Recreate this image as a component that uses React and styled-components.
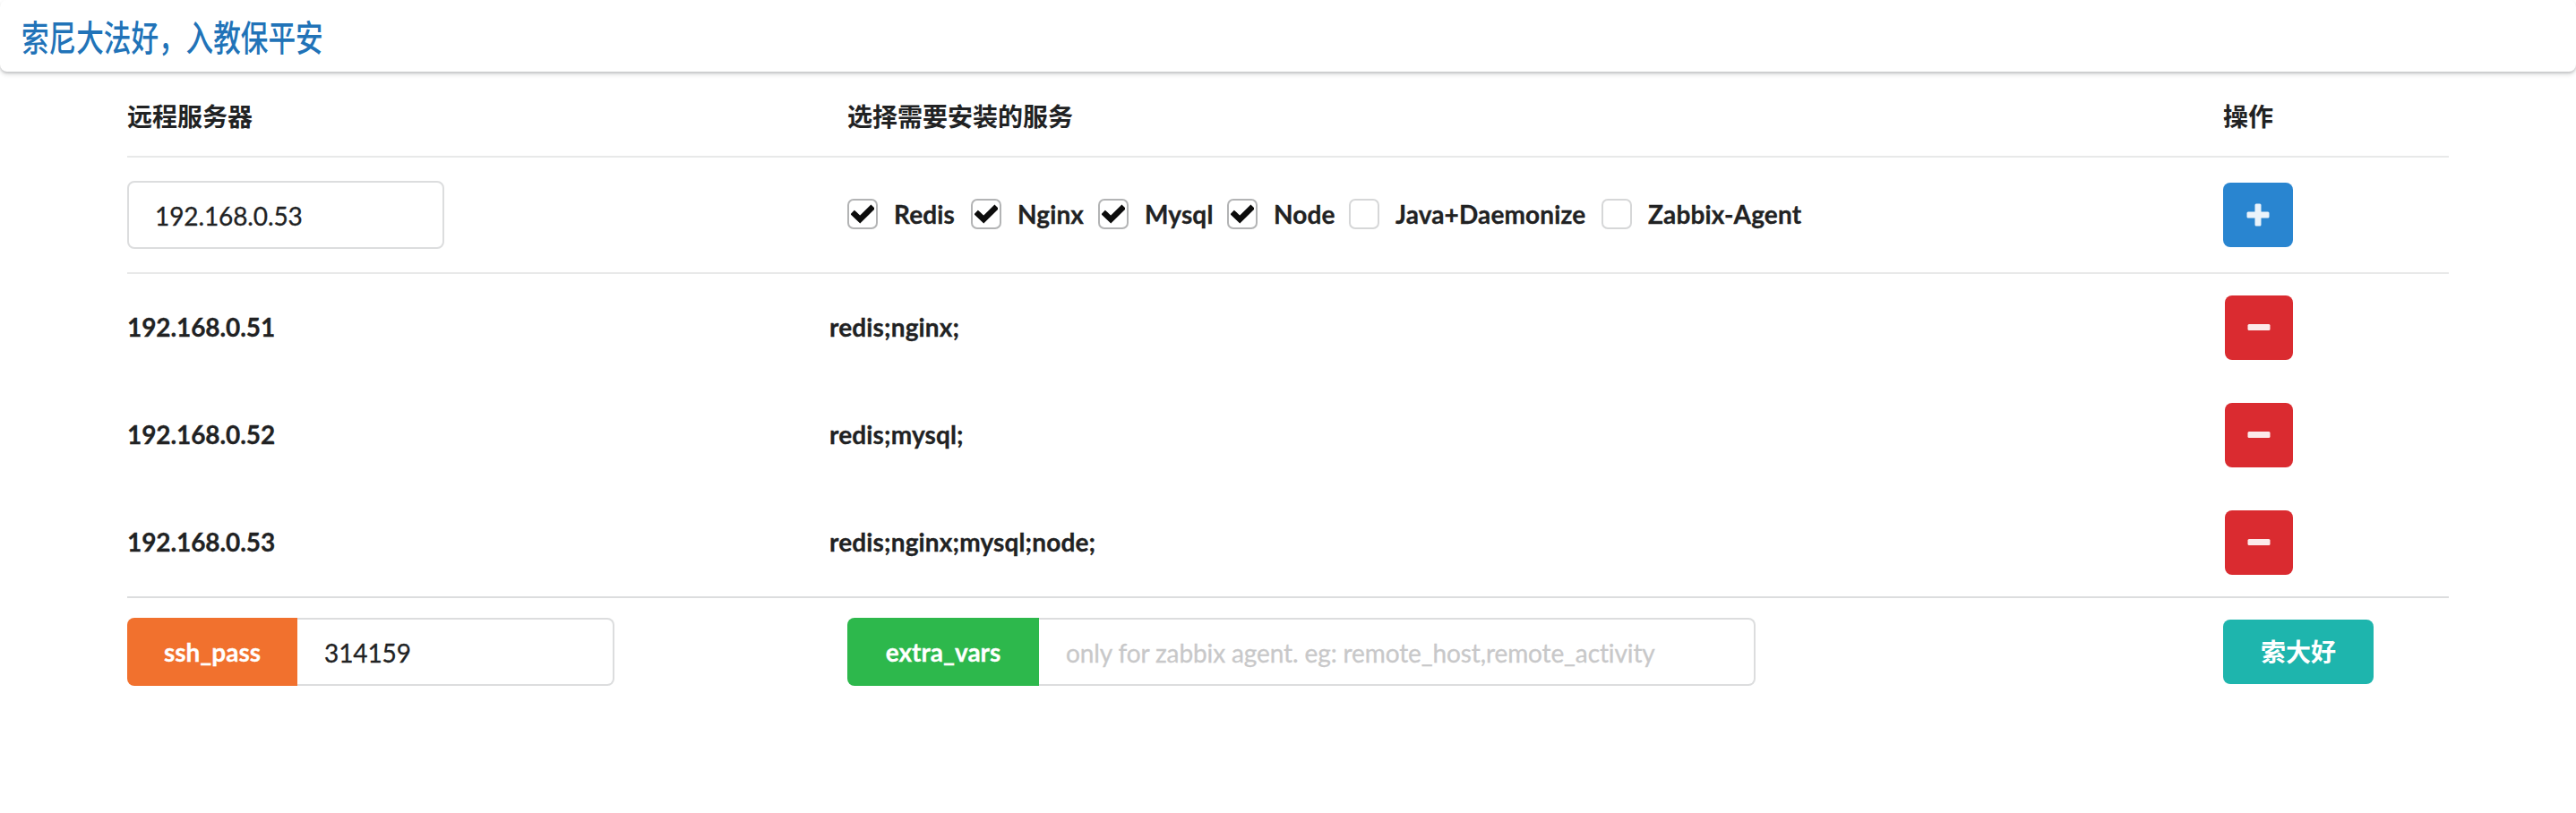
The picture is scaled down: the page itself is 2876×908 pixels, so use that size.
import React from "react";
import styled, { createGlobalStyle } from "styled-components";

const GlobalStyle = createGlobalStyle`
  *, *::before, *::after { box-sizing: border-box; }
  html { background: #fff; }
  body {
    margin: 0;
    background: #fff;
    color: #212223;
    font: 400 28px/40px Lato, "Noto Sans CJK SC", sans-serif;
  }
  input, button { font: inherit; color: inherit; margin: 0; }
`;

const Page = styled.div`
  min-height: 908px;
`;

const TopBar = styled.header`
  height: 80px;
  padding: 0 24px;
  display: flex;
  align-items: center;
  border-radius: 8px;
  box-shadow: 0 2px 2px 0 rgba(34, 36, 38, 0.12), 0 3px 5px 0 rgba(34, 36, 38, 0.16);
`;

const Brand = styled.h1`
  margin: 0;
  color: #2173b8;
  font: 500 40px/60px "Noto Sans CJK SC", sans-serif;
  white-space: nowrap;
  transform: scaleX(0.765);
  transform-origin: left center;
`;

const Main = styled.main`
  width: 2592px;
  margin: 0 142px;
`;

const Row = styled.div`
  display: grid;
  grid-template-columns: ${(p) => (p.$list ? "784px 1558px 250px" : "804px 1536px 252px")};
  align-items: center;
  height: ${(p) => p.$height}px;
  border-bottom: ${(p) => (p.$line ? `2px solid ${p.$line}` : "0")};
  font-weight: 700;
`;

const List = styled.section`
  border-bottom: 2px solid #dcddde;
`;

const Heading = styled.div`
  line-height: 40px;
  padding-top: 5px;
`;

const Cell = styled.span`
  padding-bottom: 3px;
  letter-spacing: ${(p) => p.$tracking}px;
  -webkit-text-stroke: 0.3px currentColor;
`;

const TextInput = styled.input`
  width: ${(p) => p.$width}px;
  height: 76px;
  padding: ${(p) => (p.$joined ? "2px 28px 0 30px" : "2px 28px 0 29px")};
  border: 2px solid #dcddde;
  border-left-width: ${(p) => (p.$joined ? 0 : 2)}px;
  border-radius: ${(p) => (p.$joined ? "0 8px 8px 0" : "8px")};
  background: #fff;
  color: #212223;
  font-weight: 400;
  letter-spacing: -0.11px;
  -webkit-text-stroke: 0.3px currentColor;
  outline: none;
  &::placeholder { color: #c8c8c9; opacity: 1; }
`;

const Labeled = styled.div`
  display: flex;
`;

const Tag = styled.label`
  width: ${(p) => p.$width}px;
  height: 76px;
  display: flex;
  align-items: center;
  justify-content: center;
  border-radius: 8px 0 0 8px;
  background: ${(p) => p.$color};
  color: #fff;
  -webkit-text-stroke: 0.3px currentColor;
`;

const Options = styled.div`
  display: flex;
  padding-bottom: 2px;
`;

const Option = styled.div`
  width: ${(p) => p.$width}px;
  display: flex;
  align-items: center;
  gap: 18px;
  white-space: nowrap;
`;

const OptionName = styled.span`
  letter-spacing: 0.14px;
  padding-bottom: 1px;
  -webkit-text-stroke: 0.3px currentColor;
`;

const Box = styled.span`
  flex: none;
  width: 34px;
  height: 34px;
  display: grid;
  place-items: center;
  border: 2px solid ${(p) => (p.$on ? "#b3b4b5" : "#d6d7d8")};
  border-radius: 7px;
`;

const Button = styled.button`
  width: ${(p) => p.$width}px;
  height: 72px;
  padding: 0;
  display: flex;
  align-items: center;
  justify-content: center;
  border: 0;
  border-radius: 8px;
  background: ${(p) => p.$color};
  color: #fff;
  font-weight: 700;
`;

const Check = () => (
  <svg width="26" height="22" viewBox="0 0 26 22">
    <path
      d="M4 11.200 10.200 17 22.400 5"
      fill="none"
      stroke="#0c0c0c"
      strokeWidth="6.400"
      strokeLinecap="square"
    />
  </svg>
);

const Sign = ({ plus }) => (
  <svg width="26" height="26" viewBox="0 0 26 26" fill="#fff" fillOpacity="0.9">
    {plus ? (
      <path d="M11 0.500h4a1.500 1.500 0 0 1 1.500 1.500v7.500h7.500a1.500 1.500 0 0 1 1.500 1.500v4a1.500 1.500 0 0 1-1.500 1.500h-7.500v7.500a1.500 1.500 0 0 1-1.500 1.500h-4a1.500 1.500 0 0 1-1.500-1.500v-7.500h-7.500a1.500 1.500 0 0 1-1.500-1.500v-4a1.500 1.500 0 0 1 1.500-1.500h7.500v-7.500a1.500 1.500 0 0 1 1.500-1.500z" />
    ) : (
      <rect x="0.500" y="9" width="25" height="7" rx="1.500" />
    )}
  </svg>
);

const services = [
  { name: "Redis", width: 138, on: true },
  { name: "Nginx", width: 142, on: true },
  { name: "Mysql", width: 144, on: true },
  { name: "Node", width: 136, on: true },
  { name: "Java+Daemonize", width: 282, on: false },
  { name: "Zabbix-Agent", width: 226, on: false },
];

const servers = [
  { ip: "192.168.0.51", installs: "redis;nginx;" },
  { ip: "192.168.0.52", installs: "redis;mysql;" },
  { ip: "192.168.0.53", installs: "redis;nginx;mysql;node;" },
];

export default function App() {
  return (
    <Page>
      <GlobalStyle />
      <TopBar>
        <Brand>索尼大法好，入教保平安</Brand>
      </TopBar>
      <Main>
        <Row $height={96} $line="#e8e9e9">
          <Heading>远程服务器</Heading>
          <Heading>选择需要安装的服务</Heading>
          <Heading>操作</Heading>
        </Row>
        <Row $height={130} $line="#e8e9e9">
          <TextInput $width={354} defaultValue="192.168.0.53" />
          <Options>
            {services.map((s) => (
              <Option key={s.name} $width={s.width}>
                <Box $on={s.on}>{s.on && <Check />}</Box>
                <OptionName>{s.name}</OptionName>
              </Option>
            ))}
          </Options>
          <Button $width={78} $color="#2985d0"><Sign plus /></Button>
        </Row>
        <List>
          {servers.map((s) => (
            <Row key={s.ip} $list $height={120}>
              <Cell $tracking={-0.08}>{s.ip}</Cell>
              <Cell $tracking={0.14}>{s.installs}</Cell>
              <Button $width={76} $color="#da2b30"><Sign /></Button>
            </Row>
          ))}
        </List>
        <Row $height={120}>
          <Labeled>
            <Tag $width={190} $color="#f1712e">ssh_pass</Tag>
            <TextInput $joined $width={354} defaultValue="314159" />
          </Labeled>
          <Labeled>
            <Tag $width={214} $color="#2db84c">extra_vars</Tag>
            <TextInput $joined $width={800} placeholder="only for zabbix agent. eg: remote_host,remote_activity" />
          </Labeled>
          <Button $width={168} $color="#1eb5ad">索大好</Button>
        </Row>
      </Main>
    </Page>
  );
}
